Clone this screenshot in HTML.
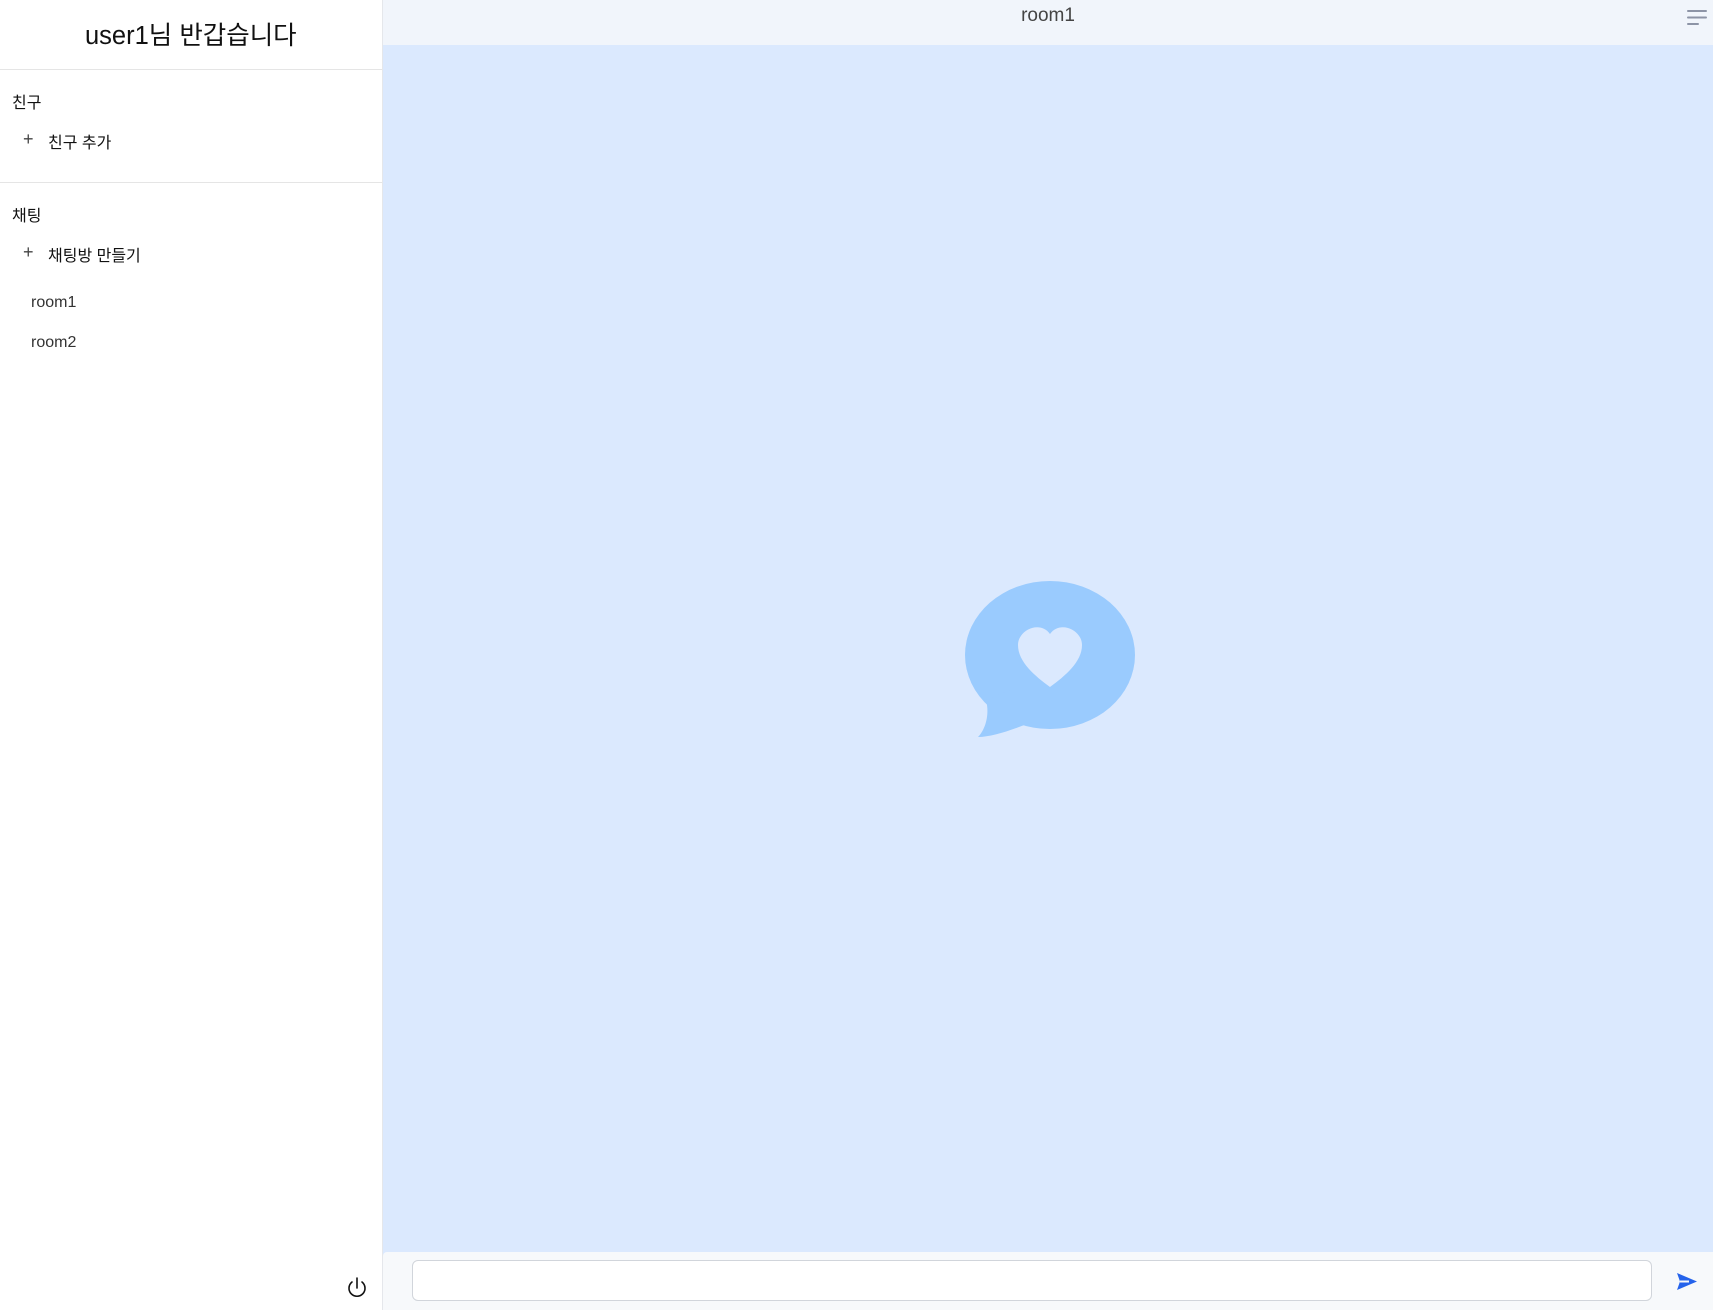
<!DOCTYPE html>
<html><head><meta charset="utf-8"><style>
*{margin:0;padding:0;box-sizing:border-box}
body{width:1713px;height:1310px;overflow:hidden;font-family:"Liberation Sans","Noto Sans CJK KR",sans-serif;background:#fff;position:relative}
.side{position:absolute;left:0;top:0;width:383px;height:1310px;background:#fff;border-right:1px solid #e5e7eb}
.t{position:absolute;white-space:nowrap;color:#111}
.hr{position:absolute;left:0;width:382px;height:1px;background:#e5e5e5}
.main{position:absolute;left:383px;top:0;right:0;height:1310px;background:#dbe9fe}
.head{position:absolute;left:383px;top:0;right:0;height:45px;background:#f1f5fb}
.bot{position:absolute;left:383px;top:1252px;right:0;height:58px;background:#f7f9fb;border-top-left-radius:4px}
.ta{position:absolute;left:412px;top:1260px;width:1240px;height:41px;background:#fff;border:1px solid #d1d5db;border-radius:6px}
</style></head><body>
<div class="side">
<div class="t" style="left:85px;top:15px;font-size:25.5px">user1님 반갑습니다</div>
<div class="hr" style="top:69px"></div>
<div class="t" style="left:12px;top:89px;font-size:16px">친구</div>
<div class="t" style="left:23px;top:129px;font-size:18px;color:#444">+</div>
<div class="t" style="left:48px;top:129px;font-size:16px">친구 추가</div>
<div class="hr" style="top:182px"></div>
<div class="t" style="left:12px;top:202px;font-size:16px">채팅</div>
<div class="t" style="left:23px;top:242px;font-size:18px;color:#444">+</div>
<div class="t" style="left:48px;top:242px;font-size:16px">채팅방 만들기</div>
<div class="t" style="left:31px;top:294px;font-size:16px;color:#333">room1</div>
<div class="t" style="left:31px;top:334px;font-size:16px;color:#333">room2</div>
<svg style="position:absolute;left:344px;top:1275px" width="26" height="26" viewBox="0 0 26 26" fill="none" stroke="#111" stroke-width="1.6" stroke-linecap="round"><path d="M13 3v10"/><path d="M8 7a8 8 0 1 0 10 0"/></svg>
</div>
<div class="main"></div>
<div class="head"><div class="t" style="left:0;right:0;text-align:center;top:5px;font-size:19px;color:#444">room1</div>
<svg style="position:absolute;right:6px;top:9px" width="20" height="16" viewBox="0 0 20 16" stroke="#8d94a6" stroke-width="2" stroke-linecap="round"><path d="M1 2h18M1 8.5h18M1 15h10"/></svg></div>
<svg style="position:absolute;left:960px;top:575px" width="180" height="170" viewBox="960 575 180 170">
<ellipse cx="1050" cy="655" rx="85" ry="74" fill="#9acbfe"/>
<path d="M986 700 C990 715 985 730 978 737 C992 737 1012 730 1032 722 L1010 690 Z" fill="#9acbfe"/>
<path d="M1050 687 C1035 676 1018 662 1018 645 C1018 630 1040 620 1050 634 C1060 620 1082 630 1082 645 C1082 662 1065 676 1050 687 Z" fill="#dbe9fe"/>
</svg>
<div class="bot"></div>
<div class="ta"></div>
<svg style="position:absolute;left:1676px;top:1272px" width="22" height="20" viewBox="0 0 22 20"><path d="M1 1L21 9.5L1 18L4 9.5Z" fill="#2563eb"/><path d="M4 9.5h9" stroke="#f7f9fb" stroke-width="2"/></svg>
</body></html>
